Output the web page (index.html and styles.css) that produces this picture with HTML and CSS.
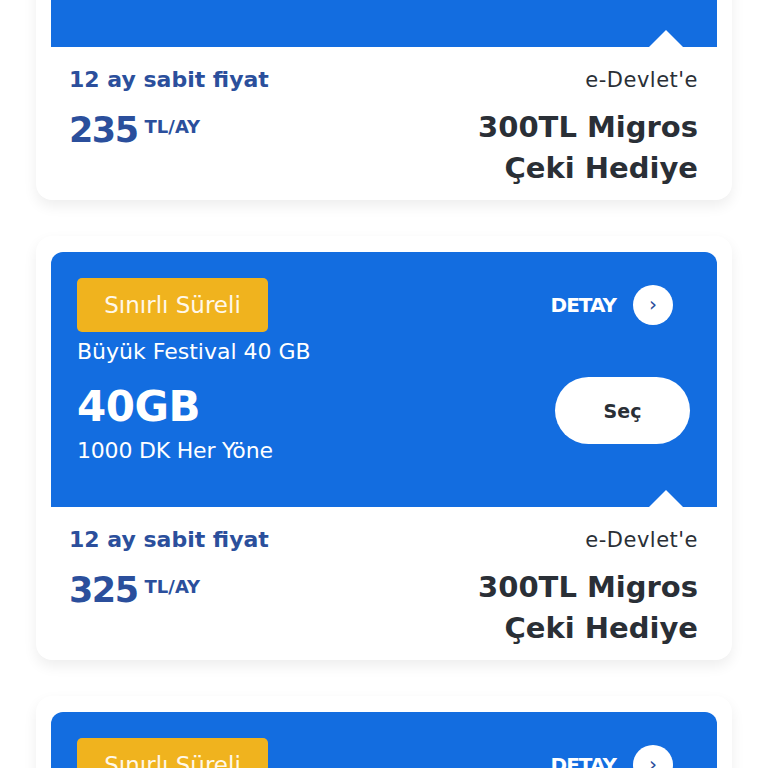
FILE: index.html
```html
<!DOCTYPE html>
<html lang="tr">
<head>
    <meta charset="UTF-8">
    <meta name="viewport" content="width=device-width, initial-scale=1.0">
    <title>Tarifeler</title>
    <link rel="stylesheet" href="styles.css">
</head>
<body>
    <div class="list">
        <div class="card">
            <div class="panel">
                <div class="panel-left">
                    <span class="badge">Sınırlı Süreli</span>
                    <div class="plan-name">Büyük Festival 20 GB</div>
                    <div class="plan-gb">20GB</div>
                    <div class="plan-min">1000 DK Her Yöne</div>
                </div>
                <div class="panel-right">
                    <a class="detail">DETAY <span class="detail-icon">&rsaquo;</span></a>
                    <button class="select">Seç</button>
                </div>
                <span class="notch"></span>
            </div>
            <div class="bottom">
                <div class="price-col">
                    <div class="fixed">12 ay sabit fiyat</div>
                    <div class="price">235<span class="unit">TL/AY</span></div>
                </div>
                <div class="gift-col">
                    <div class="gift-top">e-Devlet'e</div>
                    <div class="gift">300TL Migros<br>Çeki Hediye</div>
                </div>
            </div>
        </div>

        <div class="card">
            <div class="panel">
                <div class="panel-left">
                    <span class="badge">Sınırlı Süreli</span>
                    <div class="plan-name">Büyük Festival 40 GB</div>
                    <div class="plan-gb">40GB</div>
                    <div class="plan-min">1000 DK Her Yöne</div>
                </div>
                <div class="panel-right">
                    <a class="detail">DETAY <span class="detail-icon">&rsaquo;</span></a>
                    <button class="select">Seç</button>
                </div>
                <span class="notch"></span>
            </div>
            <div class="bottom">
                <div class="price-col">
                    <div class="fixed">12 ay sabit fiyat</div>
                    <div class="price">325<span class="unit">TL/AY</span></div>
                </div>
                <div class="gift-col">
                    <div class="gift-top">e-Devlet'e</div>
                    <div class="gift">300TL Migros<br>Çeki Hediye</div>
                </div>
            </div>
        </div>

        <div class="card">
            <div class="panel">
                <div class="panel-left">
                    <span class="badge">Sınırlı Süreli</span>
                    <div class="plan-name">Büyük Festival 60 GB</div>
                    <div class="plan-gb">60GB</div>
                    <div class="plan-min">1000 DK Her Yöne</div>
                </div>
                <div class="panel-right">
                    <a class="detail">DETAY <span class="detail-icon">&rsaquo;</span></a>
                    <button class="select">Seç</button>
                </div>
                <span class="notch"></span>
            </div>
        </div>
    </div>
</body>
</html>
```

FILE: styles.css
```css
/* Tarife listesi */
body {
    margin: 0;
    padding: 0;
    background-color: #ffffff;
    font-family: 'DejaVu Sans', 'Open Sans', sans-serif;
    overflow: hidden;
    height: 768px;
}

.list {
    margin-top: -224px; /* sayfa kaydırılmış durumda */
    display: flex;
    flex-direction: column;
    gap: 36px;
}

.card {
    margin: 0 36px;
    padding: 16px 15px 0;
    background-color: #ffffff;
    border-radius: 16px;
    box-shadow: 0 6px 14px rgba(0, 0, 0, 0.07);
}

.panel {
    position: relative;
    height: 255px;
    box-sizing: border-box;
    padding: 26px 27px 0 26px;
    background-color: #136de0;
    border-radius: 12px 12px 0 0;
    display: flex;
    justify-content: space-between;
    color: #ffffff;
}

.panel-left {
    display: flex;
    flex-direction: column;
    align-items: flex-start;
}

.badge {
    display: inline-block;
    width: 191px;
    height: 54px;
    line-height: 54px;
    text-align: center;
    background-color: #f0b31e;
    border-radius: 5px;
    font-size: 23px;
    color: #fff8ea;
}

.plan-name {
    margin-top: 7px;
    font-size: 22px;
    line-height: 26px;
}

.plan-gb {
    margin-top: 15px;
    font-size: 42px;
    font-weight: 700;
    line-height: 54px;
    letter-spacing: -0.5px;
}

.plan-min {
    margin-top: 4px;
    font-size: 22px;
    line-height: 26px;
    letter-spacing: -0.2px;
}

.panel-right {
    display: flex;
    flex-direction: column;
    align-items: flex-end;
}

.detail {
    display: flex;
    align-items: center;
    gap: 17px;
    height: 40px;
    margin-top: 7px;
    margin-right: 17px;
    font-size: 20px;
    font-weight: 700;
    letter-spacing: -1px;
    color: #ffffff;
}

.detail-icon {
    width: 40px;
    height: 40px;
    border-radius: 50%;
    background-color: #ffffff;
    color: #2b4f9c;
    font-size: 20px;
    font-weight: 400;
    line-height: 38px;
    text-align: center;
    letter-spacing: 0;
}

.select {
    margin-top: 52px;
    width: 135px;
    height: 67px;
    border: none;
    border-radius: 34px;
    background-color: #ffffff;
    color: #2a2f36;
    font-family: inherit;
    font-size: 19px;
    font-weight: 700;
}

.notch {
    position: absolute;
    right: 34px;
    bottom: 0;
    width: 0;
    height: 0;
    border-left: 17px solid transparent;
    border-right: 17px solid transparent;
    border-bottom: 17px solid #ffffff;
}

.bottom {
    display: flex;
    justify-content: space-between;
    padding: 19px 19px 11px 18px;
}

.fixed {
    font-size: 22px;
    font-weight: 700;
    color: #2b4f9c;
    line-height: 28px;
}

.price {
    margin-top: 14px;
    font-size: 35px;
    font-weight: 700;
    color: #2b4f9c;
    line-height: 44px;
    letter-spacing: -1.5px;
}

.unit {
    margin-left: 7px;
    font-size: 18px;
    line-height: 18px;
    vertical-align: 9px;
    letter-spacing: 0;
}

.gift-col {
    text-align: right;
    color: #2a2f36;
}

.gift-top {
    font-size: 21px;
    line-height: 28px;
    letter-spacing: 0.5px;
}

.gift {
    margin-top: 13px;
    font-size: 29px;
    font-weight: 700;
    line-height: 41px;
}
```
